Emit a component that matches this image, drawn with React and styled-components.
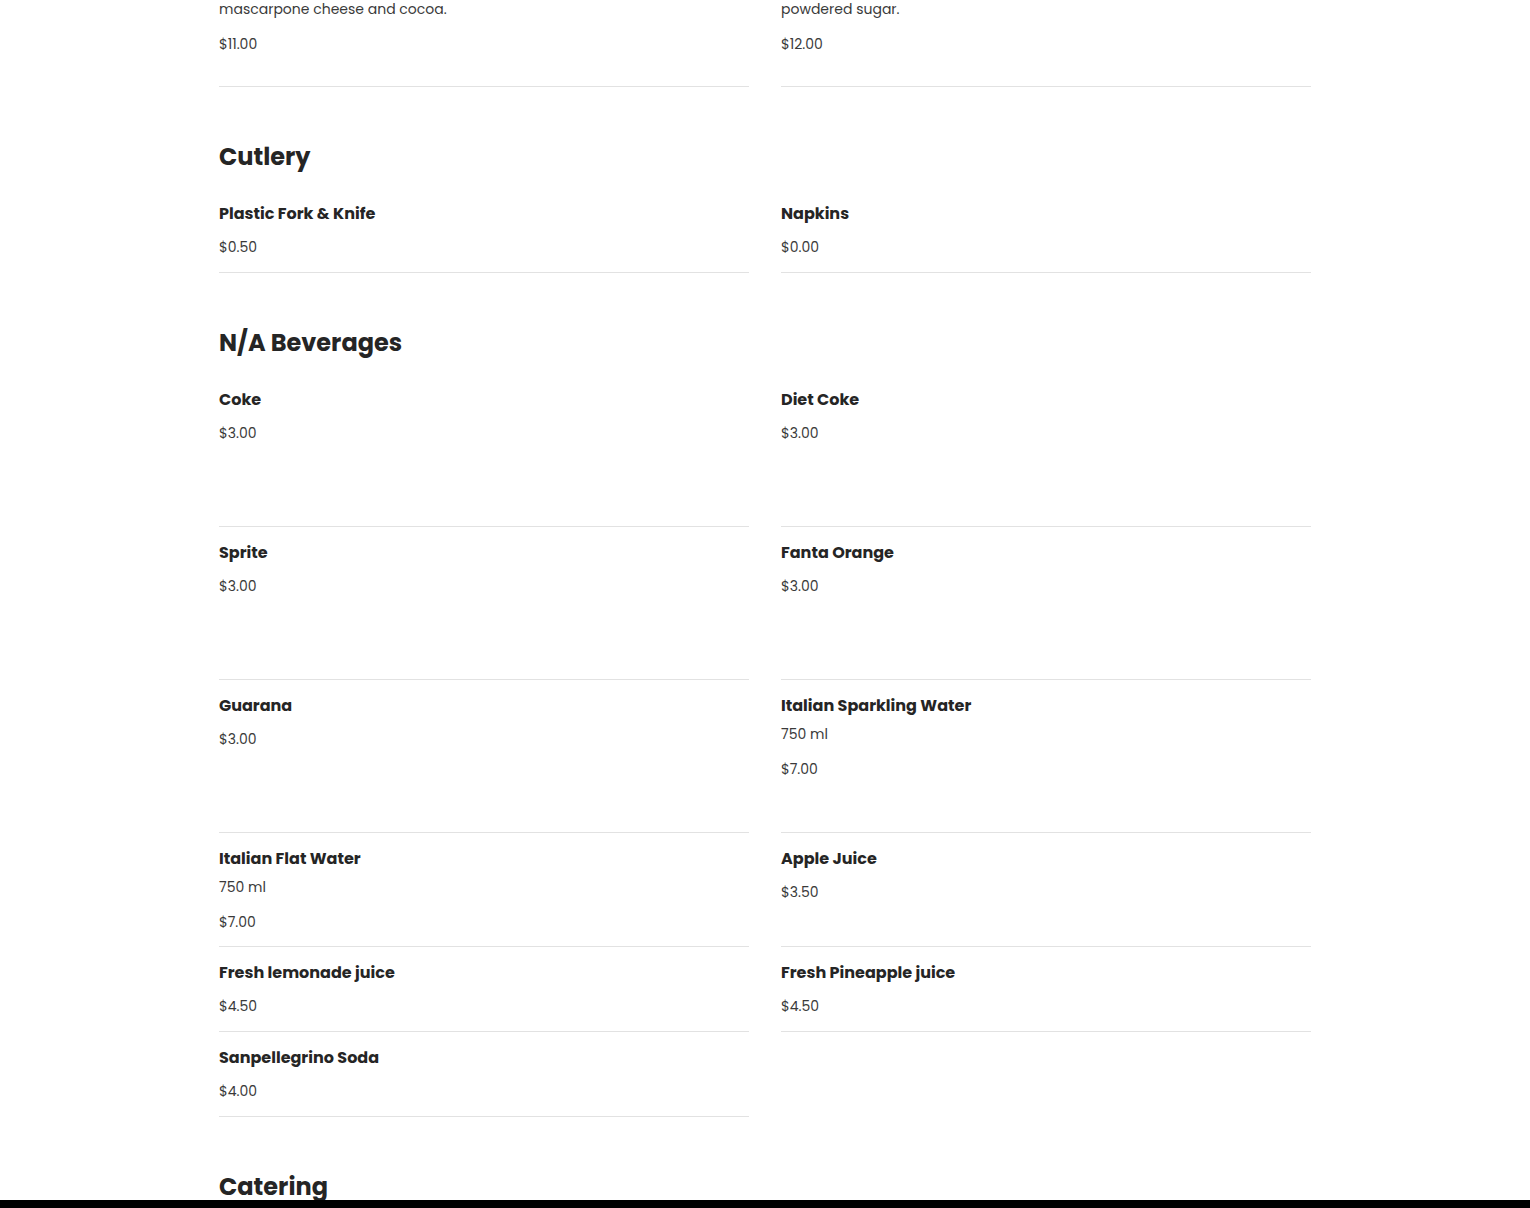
import React from "react";
import styled, { createGlobalStyle } from "styled-components";

const Global = createGlobalStyle`
  html, body { margin: 0; padding: 0; background: #fff; }
  body {
    font-family: "Poppins", "Open Sans", "DejaVu Sans", sans-serif;
    color: #222;
    overflow: hidden;
  }
`;

// the page is shown scrolled: the previous section's last line sits at the top
const Page = styled.main`
  width: 1092px;
  margin: -2px auto 0;
`;

const Section = styled.section`
  padding-top: ${(p) => (p.$first ? "0" : "52px")};
`;

const Heading = styled.h2`
  margin: 0 0 13px;
  font-size: 24px;
  line-height: 36px;
  font-weight: 700;
  color: #252525;
`;

const Grid = styled.div`
  display: grid;
  grid-template-columns: 1fr 1fr;
  column-gap: 32px;
`;

const Item = styled.div`
  box-sizing: border-box;
  min-height: ${(p) => p.$minH || 0}px;
  padding: ${(p) => (p.$flush ? 0 : 16)}px 0 ${(p) => p.$pb ?? 15}px;
  border-bottom: 1px solid #e2e2e2;
`;

const Name = styled.div`
  font-size: 16px;
  line-height: 20px;
  font-weight: 700;
  color: #252525;
`;

const Desc = styled.div`
  margin-top: ${(p) => (p.$flush ? 0 : 7)}px;
  font-size: 14px;
  line-height: 22px;
  color: #3a3a3a;
`;

const Price = styled.div`
  margin-top: ${(p) => p.$gap ?? 13}px;
  font-size: 14px;
  line-height: 20px;
  color: #3a3a3a;
`;

const BottomBar = styled.div`
  position: fixed;
  left: 0;
  right: 0;
  bottom: 0;
  height: 8px;
  background: #000;
`;

const sections = [
  {
    title: "Cutlery",
    items: [
      { name: "Plastic Fork & Knife", price: "$0.50" },
      { name: "Napkins", price: "$0.00" },
    ],
  },
  {
    title: "N/A Beverages",
    items: [
      { name: "Coke", price: "$3.00", minH: 153 },
      { name: "Diet Coke", price: "$3.00", minH: 153 },
      { name: "Sprite", price: "$3.00", minH: 153 },
      { name: "Fanta Orange", price: "$3.00", minH: 153 },
      { name: "Guarana", price: "$3.00", minH: 153 },
      { name: "Italian Sparkling Water", desc: "750 ml", price: "$7.00", minH: 153 },
      { name: "Italian Flat Water", desc: "750 ml", price: "$7.00" },
      { name: "Apple Juice", price: "$3.50" },
      { name: "Fresh lemonade juice", price: "$4.50" },
      { name: "Fresh Pineapple juice", price: "$4.50" },
      { name: "Sanpellegrino Soda", price: "$4.00" },
    ],
  },
];

function MenuItem({ name, desc, price, minH }) {
  return (
    <Item $minH={minH} $pb={desc ? 14 : 15}>
      <Name>{name}</Name>
      {desc && <Desc>{desc}</Desc>}
      <Price $gap={desc ? 14 : 13}>{price}</Price>
    </Item>
  );
}

export default function App() {
  return (
    <>
      <Global />
      <Page>
        <Section $first>
          <Grid>
            <Item $flush $minH={89}>
              <Desc $flush>mascarpone cheese and cocoa.</Desc>
              <Price $gap={14}>$11.00</Price>
            </Item>
            <Item $flush $minH={89}>
              <Desc $flush>powdered sugar.</Desc>
              <Price $gap={14}>$12.00</Price>
            </Item>
          </Grid>
        </Section>
        {sections.map((s) => (
          <Section key={s.title}>
            <Heading>{s.title}</Heading>
            <Grid>
              {s.items.map((it) => (
                <MenuItem key={it.name} {...it} />
              ))}
            </Grid>
          </Section>
        ))}
        <Section>
          <Heading>Catering</Heading>
        </Section>
      </Page>
      <BottomBar />
    </>
  );
}
